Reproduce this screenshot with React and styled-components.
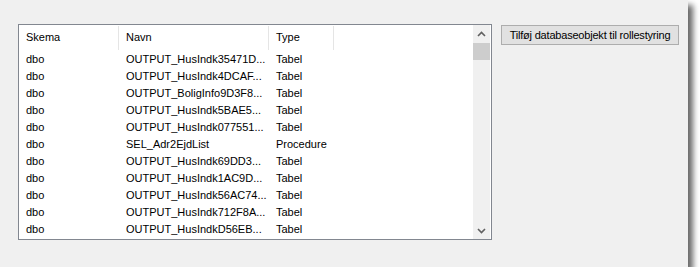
import React from 'react';
import styled, { createGlobalStyle } from 'styled-components';

const rows = [
  ['dbo', 'OUTPUT_HusIndk35471D...', 'Tabel'],
  ['dbo', 'OUTPUT_HusIndk4DCAF...', 'Tabel'],
  ['dbo', 'OUTPUT_BoligInfo9D3F8...', 'Tabel'],
  ['dbo', 'OUTPUT_HusIndk5BAE5...', 'Tabel'],
  ['dbo', 'OUTPUT_HusIndk077551...', 'Tabel'],
  ['dbo', 'SEL_Adr2EjdList', 'Procedure'],
  ['dbo', 'OUTPUT_HusIndk69DD3...', 'Tabel'],
  ['dbo', 'OUTPUT_HusIndk1AC9D...', 'Tabel'],
  ['dbo', 'OUTPUT_HusIndk56AC74...', 'Tabel'],
  ['dbo', 'OUTPUT_HusIndk712F8A...', 'Tabel'],
  ['dbo', 'OUTPUT_HusIndkD56EB...', 'Tabel'],
];

const columns = [
  { title: 'Skema', width: 100 },
  { title: 'Navn', width: 150 },
  { title: 'Type', width: 65 },
];

const Chevron = ({ up }) => (
  <svg width="9" height="6" viewBox="0 0 9 6">
    <path
      d={up ? 'M1 5 L4.5 1.5 L8 5' : 'M1 1 L4.5 4.5 L8 1'}
      fill="none"
      stroke="#606060"
      strokeWidth="1.6"
    />
  </svg>
);

const App = () => {
  return (
    <>
      <GlobalStyle />
      <Window>
        <ListBox>
          <ListArea>
            <HeaderRow>
              {columns.map((c) => (
                <HeaderCell key={c.title} $w={c.width}>{c.title}</HeaderCell>
              ))}
              <HeaderFill />
            </HeaderRow>
            {rows.map((r, i) => (
              <Row key={i}>
                {r.map((v, j) => (
                  <Cell key={j} $w={columns[j].width}>{v}</Cell>
                ))}
              </Row>
            ))}
          </ListArea>
          <ScrollBar>
            <ArrowButton><Chevron up /></ArrowButton>
            <Thumb />
            <Track />
            <ArrowButton><Chevron /></ArrowButton>
          </ScrollBar>
        </ListBox>
        <ActionButton>Tilføj databaseobjekt til rollestyring</ActionButton>
      </Window>
    </>
  );
};

const GlobalStyle = createGlobalStyle`
  body {
    margin: 0;
    background: #ffffff;
    font-family: "Liberation Sans", Arial, sans-serif;
  }
`;

const Window = styled.div`
  width: 688px;
  height: 267px;
  box-sizing: border-box;
  background: #f0f0f0;
  padding: 24px 0 0 18px;
  display: flex;
  align-items: flex-start;
  gap: 9px;
  box-shadow: 5px 5px 6px rgba(0, 0, 0, 0.6);
`;

const ListBox = styled.div`
  width: 474px;
  height: 216px;
  box-sizing: border-box;
  border: 1px solid #828790;
  background: #ffffff;
  display: flex;
  overflow: hidden;
`;

const ListArea = styled.div`
  flex: 1;
  display: flex;
  flex-direction: column;
`;

const HeaderRow = styled.div`
  display: flex;
  height: 25px;
  flex-shrink: 0;
`;

const HeaderCell = styled.div`
  width: ${(p) => p.$w}px;
  box-sizing: border-box;
  padding: 5px 0 0 7px;
  margin-top: 1px;
  font-size: 11px;
  color: #000;
  border-right: 1px solid #e5e5e5;
`;

const HeaderFill = styled.div`
  flex: 1;
`;

const Row = styled.div`
  display: flex;
  height: 17px;
  align-items: center;
  flex-shrink: 0;
`;

const Cell = styled.div`
  width: ${(p) => p.$w}px;
  box-sizing: border-box;
  padding-left: 7px;
  font-size: 11px;
  color: #000;
  white-space: nowrap;
  overflow: hidden;
`;

const ScrollBar = styled.div`
  width: 17px;
  display: flex;
  flex-direction: column;
  background: #f0f0f0;
  margin-right: 1px;
`;

const ArrowButton = styled.div`
  height: 17px;
  display: flex;
  align-items: center;
  justify-content: center;
`;

const Thumb = styled.div`
  height: 17px;
  margin: 1px 0;
  background: #cdcdcd;
`;

const Track = styled.div`
  flex: 1;
`;

const ActionButton = styled.button`
  margin-top: 1px;
  width: 178px;
  height: 20px;
  padding: 0;
  background: #e1e1e1;
  border: 1px solid #adadad;
  font-family: "Liberation Sans", Arial, sans-serif;
  font-size: 11px;
  letter-spacing: -0.2px;
  white-space: nowrap;
  color: #000;
`;

export default App;
